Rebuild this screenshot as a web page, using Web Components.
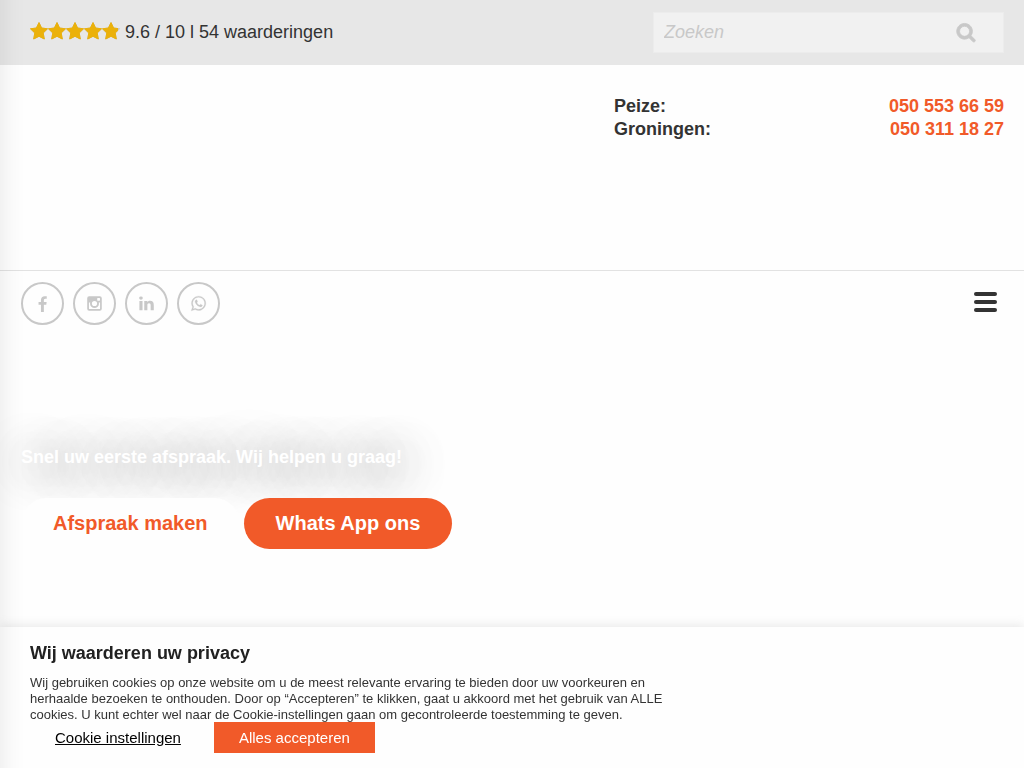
<!DOCTYPE html>
<html lang="nl">
<head>
<meta charset="utf-8">
<meta name="viewport" content="width=device-width, initial-scale=1">
<title>Praktijk Peize en Groningen</title>
<style>
  body {
    margin: 0;
    background: #fefefe;
    color: #333;
    font: 18px/23px "Liberation Sans", Arial, sans-serif;
    --accent: #f15a29;
    --muted: #c8c8c8;
  }
</style>
</head>
<body>
<site-page></site-page>

<script>
const define = (name, html, setup) => customElements.define(name, class extends HTMLElement {
  constructor() {
    super();
    const template = document.createElement('template');
    template.innerHTML = `<style>*{box-sizing:border-box}:host{display:block}a{color:inherit;text-decoration:none}</style>${html}`;
    this.attachShadow({ mode: 'open' }).append(template.content.cloneNode(true));
    if (setup) setup(this, this.shadowRoot);
  }
});

const ICONS = {
  search: '<path stroke="currentColor" stroke-width="70" d="M1216 832q0-185-131.5-316.5t-316.5-131.5-316.5 131.5-131.5 316.5 131.5 316.5 316.5 131.5 316.5-131.5 131.5-316.5zm512 832q0 52-38 90t-90 38q-54 0-90-38l-343-342q-179 124-399 124-143 0-273.5-55.5t-225-150-150-225-55.5-273.5 55.5-273.5 150-225 225-150 273.5-55.5 273.5 55.5 225 150 150 225 55.5 273.5q0 220-124 399l343 343q37 37 37 90z"/>',
  facebook: '<path d="M1343 12v264h-157q-86 0-116 36t-30 108v189h293l-39 296h-254v759h-306v-759h-255v-296h255v-218q0-186 104-288.5t277-102.5q147 0 228 12z" transform="translate(0 128)"/>',
  instagram: '<path fill-rule="evenodd" d="M330 128h1132a202 202 0 0 1 202 202v1132a202 202 0 0 1-202 202H330a202 202 0 0 1-202-202V330a202 202 0 0 1 202-202zM310 790v640q0 54 54 54h1064q54 0 54-54V790h-138q21 66 21 127a469 450 0 0 1-938 0q0-61 21-127zM896 626a275 270 0 1 0 0 540 275 270 0 0 0 0-540zM1240 306q-60 0-60 60v168q0 60 60 60h176q60 0 60-60V366q0-60-60-60z"/>',
  linkedin: '<path d="M477 625v991h-330v-991h330zm21-306q1 73-50.5 122t-135.5 49h-2q-82 0-132-49t-50-122q0-74 51.5-122.500t134.500-48.500 133 48.500 51 122.500zm1166 729v568h-329v-530q0-105-40.500-164.500t-126.500-59.500q-63 0-105.500 34.500t-63.500 85.500q-11 30-11 81v553h-329q2-399 2-647t-1-296l-1-48h329v144h-2q20-32 41-56t56.500-52 87-43.500 114.500-15.500q171 0 275 113.500t104 332.500z"/>',
  whatsapp: '<path stroke="currentColor" stroke-width="30" d="M1113 974q13 0 97.500 44t89.500 53q2 5 2 15 0 33-17 76-16 39-71 65.500t-102 26.500q-57 0-190-62-98-45-170-118t-148-185q-72-107-71-194v-8q3-91 74-158 24-22 52-22 6 0 18 1.500t19 1.500q19 0 26.500 6.500t15.500 27.500q8 20 33 88t25 75q0 21-34.500 57.500t-34.500 46.500q0 7 5 15 34 73 102 137 56 53 151 101 12 7 22 7 15 0 54-48.500t52-48.500zm-203 530q127 0 243.500-50t200.500-134 134-200.500 50-243.500-50-243.500-134-200.500-200.500-134-243.500-50-243.500 50-200.500 134-134 200.500-50 243.500q0 203 120 368l-79 233 242-77q158 104 345 104zm0-1382q153 0 292.500 60t240.500 161 161 240.500 60 292.500-60 292.500-161 240.500-240.500 161-292.500 60q-195 0-365-94l-417 134 136-405q-108-178-108-389 0-153 60-292.500t161-240.500 240.500-161 292.500-60z"/>'
};

define('ui-icon', `
  <style>
    :host { width: 17px; height: 17px; }
    svg { display: block; width: 100%; height: 100%; fill: currentColor; overflow: visible; }
  </style>
  <svg viewBox="0 0 1792 1792" aria-hidden="true"></svg>`,
  (host, root) => { root.querySelector('svg').innerHTML = ICONS[host.getAttribute('name')]; });

define('star-rating', `
  <style>
    :host { width: 90px; height: 18px; }
    svg { display: block; }
  </style>
  <svg width="90" height="18" viewBox="0 0 90 18" role="img" aria-label="Beoordeling">
    <defs>
      <path id="star" stroke-width="1" stroke-linejoin="round" d="M9 .6l2.600 5.400 5.900 .8-4.300 4.200 1.100 6L9 14.300 3.700 17l1.100-6L.5 6.800l5.900-.8z"/>
      <g id="row"><use href="#star"/><use href="#star" x="18"/><use href="#star" x="36"/><use href="#star" x="54"/><use href="#star" x="72"/></g>
      <clipPath id="score"><rect width="88" height="18"/></clipPath>
    </defs>
    <use href="#row" fill="#c4c4c4" stroke="#c4c4c4"/>
    <use href="#row" fill="#ebb10a" stroke="#ebb10a" clip-path="url(#score)"/>
  </svg>`);

define('search-box', `
  <style>
    :host { width: 351px; }
    form { display: flex; align-items: center; height: 41px; background: #f1f1f1; border: 1px solid #ececec; }
    input { flex: 1; min-width: 0; height: 39px; padding: 0 10px; border: 0; background: none; color: #333; font: italic 18px/23px "Liberation Sans", Arial, sans-serif; }
    input::placeholder { color: var(--muted); opacity: 1; }
    button { display: grid; place-items: center; width: 74px; height: 39px; padding: 0 0 2px; border: 0; background: none; color: var(--muted); }
    ui-icon { width: 20px; height: 20px; }
  </style>
  <form role="search">
    <input type="search" placeholder="Zoeken" aria-label="Zoeken">
    <button type="button" aria-label="Zoek"><ui-icon name="search"></ui-icon></button>
  </form>`);

define('top-bar', `
  <style>
    :host { display: flex; align-items: center; justify-content: space-between; padding: 12px 20px 12px 30px; background: #e7e7e7; }
    a { display: flex; align-items: center; gap: 5px; }
    star-rating { margin-bottom: 4px; }
  </style>
  <a href="#waarderingen"><star-rating></star-rating><span>9.6 / 10 l 54 waarderingen</span></a>
  <search-box></search-box>`);

define('site-header', `
  <style>
    :host { display: flex; justify-content: flex-end; min-height: 206px; padding: 30px 20px; border-bottom: 1px solid #e2e2e2; font-weight: bold; }
    dl { display: grid; grid-template-columns: 1fr auto; align-content: start; width: 390px; margin: 0; }
    dd { margin: 0; text-align: right; color: var(--accent); }
  </style>
  <dl>
    <dt>Peize:</dt><dd><a href="tel:0505536659">050 553 66 59</a></dd>
    <dt>Groningen:</dt><dd><a href="tel:0503111827">050 311 18 27</a></dd>
  </dl>`);

define('social-link', `
  <style>
    a { display: grid; place-items: center; width: 43px; height: 43px; border: 2px solid var(--muted); border-radius: 50%; color: var(--muted); }
  </style>
  <a href="#"><ui-icon></ui-icon></a>`,
  (host, root) => {
    const name = host.getAttribute('name');
    const icon = document.createElement('template');
    icon.innerHTML = `<ui-icon name="${name}"></ui-icon>`;
    root.querySelector('a').replaceChildren(icon.content);
    root.querySelector('a').setAttribute('aria-label', name);
    root.querySelector('a').href = '#' + name;
  });

define('nav-bar', `
  <style>
    :host { display: flex; align-items: flex-start; justify-content: space-between; padding: 11px 27px 10px 21px; }
    nav { display: flex; gap: 9px; }
    button { display: grid; gap: 4px; width: 23px; margin-top: 10px; padding: 0; border: 0; background: none; }
    i { height: 4px; border-radius: 2px; background: #333; }
  </style>
  <nav>
    <social-link name="facebook"></social-link>
    <social-link name="instagram"></social-link>
    <social-link name="linkedin"></social-link>
    <social-link name="whatsapp"></social-link>
  </nav>
  <button type="button" aria-label="Menu"><i></i><i></i><i></i></button>`);

define('pill-link', `
  <style>
    a { display: block; padding: 14px 32px; border-radius: 26px; background: #fefefe; color: var(--accent); font-weight: bold; font-size: 20px; }
    :host([primary]) a { background: var(--accent); color: #fff; }
  </style>
  <a href="#contact"><slot></slot></a>`);

define('hero-block', `
  <style>
    :host { padding: 111px 20px 200px 21px; }
    p { margin: 0 0 29px; color: #fff; font-weight: bold; text-shadow: 5px 5px 45px #333; }
    div { display: flex; gap: 4px; }
  </style>
  <p>Snel uw eerste afspraak. Wij helpen u graag!</p>
  <div>
    <pill-link>Afspraak maken</pill-link>
    <pill-link primary>Whats App ons</pill-link>
  </div>`);

define('cookie-bar', `
  <style>
    :host { position: fixed; left: 0; right: 0; bottom: 0; padding: 15px 30px; background: #fefefe; box-shadow: 0 -1px 10px rgba(172, 171, 171, .3); }
    h2 { margin: 0 0 10px; color: #212121; font-size: 18px; line-height: 23px; }
    p { max-width: 660px; margin: 0; font-size: 13px; line-height: 16px; }
    div { display: flex; margin-top: -1px; }
    button { height: 31px; padding: 0 25px; border: 0; font: 15px/18px "Liberation Sans", Arial, sans-serif; }
    .settings { background: none; color: #000; text-decoration: underline; }
    .accept { margin-left: 8px; background: var(--accent); color: #fff; }
  </style>
  <h2>Wij waarderen uw privacy</h2>
  <p>Wij gebruiken cookies op onze website om u de meest relevante ervaring te bieden door uw voorkeuren en herhaalde bezoeken te onthouden. Door op “Accepteren” te klikken, gaat u akkoord met het gebruik van ALLE cookies. U kunt echter wel naar de Cookie-instellingen gaan om gecontroleerde toestemming te geven.</p>
  <div>
    <button type="button" class="settings">Cookie instellingen</button>
    <button type="button" class="accept">Alles accepteren</button>
  </div>`);

/* Off-canvas menu: closed, only its shadow falls on the page. */
define('menu-drawer', `
  <style>
    :host { position: fixed; top: -30px; bottom: -30px; right: 100%; width: 300px; background: #fff; box-shadow: 0 0 25px rgba(0, 0, 0, .1); pointer-events: none; }
  </style>`);

define('site-page', `
  <style>:host { overflow-x: clip; }</style>
  <top-bar></top-bar>
  <site-header></site-header>
  <nav-bar></nav-bar>
  <main><hero-block></hero-block></main>
  <cookie-bar></cookie-bar>
  <menu-drawer></menu-drawer>`);
</script>
</body>
</html>
